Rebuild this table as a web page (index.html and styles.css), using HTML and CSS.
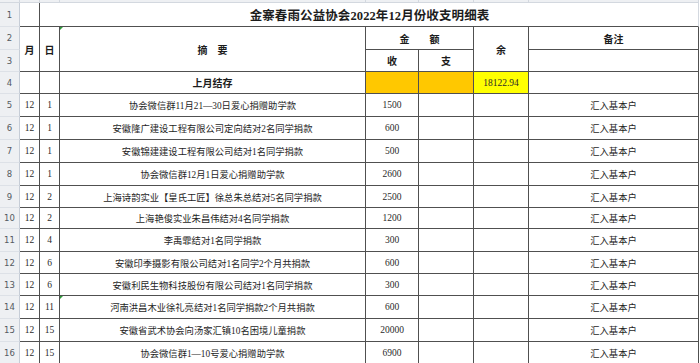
FILE: index.html
```html
<!DOCTYPE html>
<html lang="zh-CN">
<head>
<meta charset="utf-8">
<title>金寨春雨公益协会2022年12月份收支明细表</title>
<link rel="stylesheet" href="styles.css">
</head>
<body>
<div class="sheet">
  <div class="ch"></div><div class="ch"></div><div class="ch"></div><div class="ch"></div><div class="ch"></div><div class="ch"></div><div class="ch"></div><div class="ch"></div>

  <div class="rh">1</div>
  <div class="c"></div>
  <div class="c title span6">金寨春雨公益协会2022年12月份收支明细表</div>

  <div class="rh">2</div>
  <div class="c h rows2">月</div>
  <div class="c h rows2">日</div>
  <div class="c h rows2 rel"><span class="mark"></span>摘　要</div>
  <div class="c h span2">金　　额</div>
  <div class="c h rows2">余</div>
  <div class="c h">备注</div>

  <div class="rh">3</div>
  <div class="c h">收</div>
  <div class="c h">支</div>
  <div class="c"></div>

  <div class="rh">4</div>
  <div class="c"></div>
  <div class="c"></div>
  <div class="c h">上月结存</div>
  <div class="c orange"></div>
  <div class="c orange"></div>
  <div class="c yellow num">18122.94</div>
  <div class="c"></div>

  <div class="rh">5</div><div class="c num">12</div><div class="c num">1</div><div class="c d">协会微信群11月21—30日爱心捐赠助学款</div><div class="c num">1500</div><div class="c"></div><div class="c"></div><div class="c d">汇入基本户</div>
  <div class="rh">6</div><div class="c num">12</div><div class="c num">1</div><div class="c d">安徽隆广建设工程有限公司定向结对2名同学捐款</div><div class="c num">600</div><div class="c"></div><div class="c"></div><div class="c d">汇入基本户</div>
  <div class="rh">7</div><div class="c num">12</div><div class="c num">1</div><div class="c d">安徽锦建建设工程有限公司结对1名同学捐款</div><div class="c num">500</div><div class="c"></div><div class="c"></div><div class="c d">汇入基本户</div>
  <div class="rh">8</div><div class="c num">12</div><div class="c num">1</div><div class="c d">协会微信群12月1日爱心捐赠助学款</div><div class="c num">2600</div><div class="c"></div><div class="c"></div><div class="c d">汇入基本户</div>
  <div class="rh">9</div><div class="c num">12</div><div class="c num">2</div><div class="c d">上海诗韵实业【皇氏工匠】徐总朱总结对5名同学捐款</div><div class="c num">2500</div><div class="c"></div><div class="c"></div><div class="c d">汇入基本户</div>
  <div class="rh">10</div><div class="c num">12</div><div class="c num">2</div><div class="c d">上海艳俊实业朱昌伟结对4名同学捐款</div><div class="c num">1200</div><div class="c"></div><div class="c"></div><div class="c d">汇入基本户</div>
  <div class="rh">11</div><div class="c num">12</div><div class="c num">4</div><div class="c d">李禹霏结对1名同学捐款</div><div class="c num">300</div><div class="c"></div><div class="c"></div><div class="c d">汇入基本户</div>
  <div class="rh">12</div><div class="c num">12</div><div class="c num">6</div><div class="c d">安徽印季摄影有限公司结对1名同学2个月共捐款</div><div class="c num">600</div><div class="c"></div><div class="c"></div><div class="c d">汇入基本户</div>
  <div class="rh">13</div><div class="c num">12</div><div class="c num">6</div><div class="c d">安徽利民生物科技股份有限公司结对1名同学捐款</div><div class="c num">300</div><div class="c"></div><div class="c"></div><div class="c d">汇入基本户</div>
  <div class="rh">14</div><div class="c num">12</div><div class="c num">11</div><div class="c d rel"><span class="mark"></span>河南洪昌木业徐礼亮结对1名同学捐款2个月共捐款</div><div class="c num">600</div><div class="c"></div><div class="c"></div><div class="c d">汇入基本户</div>
  <div class="rh">15</div><div class="c num">12</div><div class="c num">15</div><div class="c d">安徽省武术协会向汤家汇镇10名困境儿童捐款</div><div class="c num">20000</div><div class="c"></div><div class="c"></div><div class="c d">汇入基本户</div>
  <div class="rh">16</div><div class="c num">12</div><div class="c num">15</div><div class="c d">协会微信群1—10号爱心捐赠助学款</div><div class="c num">6900</div><div class="c"></div><div class="c"></div><div class="c d">汇入基本户</div>
</div>
</body>
</html>
```
FILE: styles.css
```css
html, body {
  margin: 0;
  padding: 0;
  background: #ffffff;
  overflow: hidden;
}
body {
  width: 700px;
  height: 363px;
}
.sheet {
  display: grid;
  grid-template-columns: 20px 20px 20px 306px 53px 55px 55px 170px;
  grid-template-rows: 3px 24px 23px 22px 22px 23px 23px 23px 23px 22px 21px 23px 22px 22px 23px 23px 22px;
  width: 699px;
  font-family: "Liberation Serif", "Noto Sans CJK SC", serif;
  color: #1c1c1c;
}
.sheet > div {
  box-sizing: border-box;
  border-right: 1px solid #505050;
  border-bottom: 1px solid #505050;
  display: flex;
  align-items: center;
  justify-content: center;
  white-space: nowrap;
  overflow: hidden;
  min-width: 0;
}
.sheet > .ch {
  background: #eef0f3;
  border-right: 1px solid #d3d8df;
  border-bottom: 1px solid #d3d8df;
}
.sheet > .rh {
  background: #eef0f3;
  border-right: 1px solid #c6cdd7;
  border-bottom: 1px solid #dde1e7;
  color: #555a61;
  font-family: "DejaVu Sans", sans-serif;
  font-size: 8.5px;
}
.sheet > .title {
  border-right: 1px solid #d3d8df;
  font-size: 12.5px;
  font-weight: bold;
  padding-left: 1px;
  letter-spacing: 0.1px;
}
.span6 { grid-column: span 6; }
.span2 { grid-column: span 2; }
.rows2 { grid-row: span 2; }
.h {
  font-family: "Liberation Serif", "Noto Sans CJK SC", serif;
  font-weight: bold;
  font-size: 10px;
}
.num {
  font-size: 9.5px;
  color: #2a2a2a;
}
.d {
  font-size: 9.3px;
  color: #1e1e1e;
}
.orange { background: #ffc800; }
.yellow { background: #ffff00; }
.rel { position: relative; }
.mark {
  position: absolute;
  left: 0;
  top: 0;
  width: 0;
  height: 0;
  border-top: 3px solid #2f9a3a;
  border-right: 3px solid transparent;
}
```
